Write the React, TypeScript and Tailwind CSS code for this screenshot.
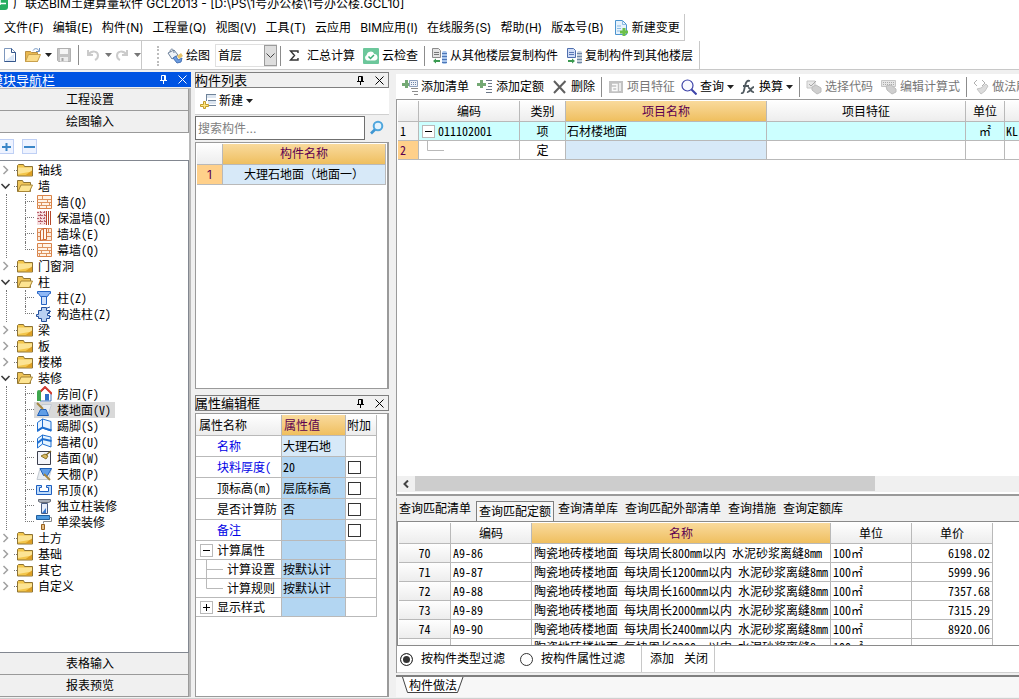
import React, { useState } from "react";

type IconProps = { name: string };

/* 16×16 drawings used by the toolbars and the tree */
const ART: Record<string, React.ReactNode> = {
  page: (
    <>
      <path d="M2.500 1.500h7l4 4v9h-11z" fill="#fff" stroke="#7d97bd" />
      <path d="M9.500 1.500v4h4v9h-11" fill="none" stroke="#35578c" />
      <path d="M4 13l8-6v7H4z" fill="#dbe7f7" />
    </>
  ),
  open: (
    <>
      <path d="M.5 4.500h5l1 1h6v9H.5z" fill="#e9b84f" stroke="#b98f45" />
      <path d="M.5 14.500l3-7h12l-3 7z" fill="#fbdc8a" stroke="#c9a14d" />
      <path d="M8 3.500c2-3 5-2 6 .5M14.500 1v3.500H11" fill="none" stroke="#6f92c0" />
    </>
  ),
  save: (
    <>
      <path d="M1.500 1.500h13v13h-12l-1-1z" fill="#c4c4c4" stroke="#b0b0b0" />
      <path d="M4 2h8v5H4z" fill="#f6f6f6" />
      <path d="M4 10h8v4.500H4z" fill="#ececec" />
      <path d="M5.500 11h2v3h-2z" fill="#a6a6a6" />
    </>
  ),
  undo: (
    <path d="M3 3v5h5M3.500 7.500C7 3 13 4 13 8.500c0 2-1 3.500-3 4.500" fill="none" stroke="#cbcbcb" strokeWidth="2" />
  ),
  redo: (
    <path d="M13 3v5H8M12.500 7.500C9 3 3 4 3 8.500c0 2 1 3.500 3 4.500" fill="none" stroke="#cbcbcb" strokeWidth="2" />
  ),
  paint: (
    <>
      <path d="M1 5l6-3 4 5-6 4z" fill="#eef2f7" stroke="#6b7f99" />
      <path d="M3 4c0-4 4-4 4 1" fill="none" stroke="#6b7f99" />
      <path d="M6 10l4 5 4-1 1-4-4 2-2-4z" fill="#6b9be0" stroke="#4773b5" />
      <path d="M10 8l4-3 2 3-4 3z" fill="#e7c36b" />
    </>
  ),
  cloud: (
    <>
      <rect width="16" height="16" rx="1" fill="#6cc79b" />
      <path d="M4 12.500a3 3 0 01-.3-5.500 4 4 0 017.600-1A3.300 3.300 0 0112 12.500z" fill="#fff" />
      <path d="M5.500 8.500l2 2 3.500-3.500" fill="none" stroke="#3fae78" strokeWidth="1.500" />
    </>
  ),
  copyFrom: (
    <>
      <path d="M1.500 .5h6l2 2v7h-8z" fill="#e4e4e4" stroke="#8b8b8b" />
      <path d="M3 4.500h5M3 6.500h5" stroke="#777" />
      <path d="M11 4.500c0-2 5-2 5 0v10c0 2-5 2-5 0z" fill="#a9c6ec" />
      <path d="M11 5.500h5M11 8.500h5M11 11.500h5M11 14.500h5" stroke="#4c76b8" />
      <path d="M2 13l3-2.500V12h4v2H5v1.500z" fill="#3a9a50" />
    </>
  ),
  copyTo: (
    <>
      <path d="M1.500 .5h6l2 2v7h-8z" fill="#cfdcf7" stroke="#4f6fae" />
      <path d="M3 4.500h5M3 6.500h5" stroke="#5a78b4" />
      <path d="M11 4.500c0-2 5-2 5 0v10c0 2-5 2-5 0z" fill="#c4cfdb" />
      <path d="M11 5.500h5M11 8.500h5M11 11.500h5M11 14.500h5" stroke="#6f86a6" />
      <path d="M9 13l-3-2.500V12H2v2h4v1.500z" fill="#3a9a50" />
    </>
  ),
  change: (
    <>
      <path d="M2.500 .5h7l4 4v10h-11z" fill="#e6f2fc" stroke="#4c94cf" />
      <path d="M9.500 .5v4h4M4 6h4M4 8.500h4M4 11h3" fill="none" stroke="#8bbbe3" />
      <path d="M9.500 8h3v2.500H15v3h-2.500V16h-3v-2.500H7v-3h2.500z" fill="#6cc04a" />
    </>
  ),
  newItem: (
    <>
      <path d="M7 2h9v3H7zM8 8h8v3H8z" fill="#dce5f0" />
      <path d="M6 1.500h10M8 7.500h8M8 12.500h8M6.500 1v7" stroke="#6e8299" fill="none" />
      <path d="M3.500 8.500h2v3h3v2h-3v2h-2v-2h-3v-2h3z" fill="#ffe680" stroke="#c29d2c" />
    </>
  ),
  addList: (
    <>
      <path d="M3 1h3v3h3v3H6v2H3V7H0V4h3z" fill="#74a974" />
      <path d="M7.500 1.500h8v6h-8z" fill="#eef2f8" stroke="#8ea0bd" />
      <path d="M9 3.500h5M9 5.500h5" stroke="#6e84a8" strokeDasharray="1 1" />
      <path d="M9 9.500h7M10 12.500h6M12 15.500h4" stroke="#8c8c8c" />
    </>
  ),
  addQuota: (
    <>
      <path d="M3 1h3v3h3v3H6v2H3V7H0V4h3z" fill="#74a974" />
      <path d="M9 1.500h6M11 4.500h4M11 7.500h4M9 10.500h6M9 13.500h6" stroke="#6b7787" />
    </>
  ),
  del: <path d="M2 2l11 12M13.500 2L2 14" stroke="#5f5f5f" strokeWidth="2" fill="none" />,
  feature: (
    <>
      <rect x="1" y="2" width="14" height="12" fill="#c2c2c2" />
      <path d="M4 5.500h5v6H4.500v-3H9M12 4v8" stroke="#fafafa" strokeWidth="1.500" fill="none" />
    </>
  ),
  query: (
    <>
      <circle cx="6.500" cy="6.500" r="5.500" fill="#f8f9ff" stroke="#3d43a8" strokeWidth="1.200" />
      <path d="M10.500 10.500l5 5" stroke="#3d43a8" strokeWidth="2" />
    </>
  ),
  fx: (
    <path d="M1 14c3 1 3-3 4-7s2-6 5-5M3 7h6M8 9c3-1 2 5 6 4M14 8c-3 0-4 6-7 5" stroke="#505a60" strokeWidth="1.800" fill="none" />
  ),
  pick: (
    <>
      <path d="M1 2h8v7H1z" fill="#e8e8e8" stroke="#c6c6c6" />
      <path d="M3 5l2 2 5-5" stroke="#a8a8a8" fill="none" />
      <path d="M6 8l4-2 5 3v4l-4 2-5-4z" fill="#cfcfcf" stroke="#bcbcbc" />
    </>
  ),
  formula: (
    <>
      <path d="M.500 1.500h14v6H.5z" fill="#e6e6e6" stroke="#c6c6c6" />
      <path d="M2 3.500h11M2 5.500h11" stroke="#a9a9a9" strokeDasharray="1 1" />
      <path d="M5 7l5-1 5 4v3l-4 2-5-4z" fill="#cfcfcf" stroke="#bcbcbc" />
    </>
  ),
  brush: (
    <>
      <path d="M4 1L1 4l3 3M9 1l3 3-3 3" stroke="#b0b0b0" fill="none" />
      <path d="M4 10l4-1 5-4 2 2-3 5-4 3z" fill="#dcdcdc" stroke="#c4c4c4" />
    </>
  ),
  find: (
    <>
      <circle cx="9" cy="6" r="4.300" fill="#e4f3fd" stroke="#4fa6dd" strokeWidth="2" />
      <path d="M6 9.500l-4 4" stroke="#3f97d3" strokeWidth="2.600" />
    </>
  ),
  folder: (
    <>
      <path d="M.5 3.500l1-1h5l1 2h8v9.500H.5z" fill="#f3c64b" stroke="#8d7334" />
      <path d="M1 5.500h14v4L1 12z" fill="#ffeeac" opacity=".75" />
      <path d="M8 13.500l7-5v5z" fill="#dd9f24" />
    </>
  ),
  folderOpen: (
    <>
      <path d="M.5 13.500v-11h5l1 2h7v9z" fill="#f0c558" stroke="#8d7334" />
      <path d="M1 13.500l3-6.500h11.500l-3 6.500z" fill="#fde491" stroke="#a88636" />
    </>
  ),
  brick: (
    <>
      <path d="M1.500 1.500h14v13h-14z" fill="#fff3e6" stroke="#d98248" />
      <path d="M1 5.500h14M1 8.500h14M1 11.500h14M6.500 2v3M11.500 5v3M5.500 8v3M10.500 11v3M13.500 8v3M3.500 11v3" stroke="#dd9460" fill="none" />
    </>
  ),
  warm: (
    <>
      <path d="M1 1h9v14H1z" fill="#f6dcdc" />
      <path d="M1 2.500h8M2 5.500h8M1 8.500h8M2 11.500h8M4.500 1v13M8.500 1v13" stroke="#b8606c" strokeDasharray="2 1" fill="none" />
      <path d="M10.500 1v14M12.500 1v14M14.500 1v14" stroke="#b5482a" />
    </>
  ),
  pier: (
    <>
      <path d="M1.500 2.500h14v12h-14zM1 6.500h14M1 10.500h14M12.500 3v4" fill="#fdebdc" stroke="#d98a58" />
      <path d="M4.500 4.500l3-2v11l-3 1zM7.500 2.500h3v11h-3z" fill="#fff6ee" stroke="#cc6630" />
    </>
  ),
  column: (
    <>
      <path d="M1.500 1.500h13v2h-1l-2 3h-7l-2-3h-1z" fill="#8fb8f6" stroke="#2563c4" />
      <path d="M5.500 6.500h5v8h-5z" fill="#cfe0fb" stroke="#2563c4" />
    </>
  ),
  tieColumn: (
    <>
      <path d="M5.500 1.500h5v3h3v3h-2v2h2v3h-3v3h-5v-3h-3v-2h-2v-2h2v-4h3z" fill="#b9d0f2" stroke="#24509c" />
      <path d="M11 2l3-1M12 13l3-3M12 7l3-2" stroke="#24509c" />
    </>
  ),
  room: (
    <>
      <path d="M4 7l5-5 6 5v8H4z" fill="#fff" stroke="#4b78b8" />
      <path d="M2 8l7-7 7 7" stroke="#d23b2f" strokeWidth="2" fill="none" />
      <path d="M1 6a2 2 0 014 0v9H1z" fill="#3ea64d" />
      <path d="M9 8h4v6.500H9z" fill="#2d6fc7" />
    </>
  ),
  floor: (
    <>
      <path d="M6 2.500h9.500l-3 9H4z" fill="#e6ebf0" stroke="#c3cad2" />
      <path d="M1.500 13.500h11L10 7.500H4.500z" fill="#5f9de6" stroke="#1d5fb8" />
      <path d="M1 1l6 6" stroke="#a58642" strokeWidth="2" />
    </>
  ),
  skirting: (
    <>
      <path d="M1.500 13.500v-9l5-3.500v9zM6.500 1v9l8.500 3V3.500z" fill="#eaf4ff" stroke="#1f6fd0" />
      <path d="M1.500 12.500l5-3 9 3" fill="none" stroke="#1f6fd0" strokeWidth="2" />
    </>
  ),
  dado: (
    <>
      <path d="M1.500 14V4.500l5-3.500v9zM6.500 1l8.500 2v10l-8.500-3z" fill="#e6f4ff" stroke="#1f6fd0" />
      <path d="M1.500 9l5-4 9 2" fill="none" stroke="#1f6fd0" strokeWidth="2" />
    </>
  ),
  wallFace: (
    <>
      <path d="M1.500 1.500h13v13h-13z" fill="#f3f5fb" stroke="#3b3f4d" />
      <path d="M5 6l5 3 2-3-3-2z" fill="#d9b95e" stroke="#8c742c" />
      <path d="M10 5l5-4" stroke="#7d6420" strokeWidth="1.500" />
    </>
  ),
  ceiling: (
    <>
      <path d="M4 2.500h11.500l-3 11H1z" fill="#e9edf1" stroke="#c3cad2" />
      <path d="M4 2.500h11.500l-4 7h-4z" fill="#5f9de6" stroke="#1d5fb8" />
      <path d="M8 8l6 6" stroke="#a58642" strokeWidth="2" />
    </>
  ),
  suspended: (
    <path d="M.5 3.500h5v2h-2v4h9v-4h-2v-2h5v9H.5z" fill="#bfdcfb" stroke="#1d5fc0" />
  ),
  freeColumn: (
    <>
      <path d="M2.500 1.500h12v2l-2 1h-8l-2-1z" fill="#a9aeb8" stroke="#666c78" />
      <path d="M5.500 5.500h6v10h-6z" fill="#e8eefb" stroke="#4a5d83" />
      <path d="M6 15l4-5v5z" fill="#3578d0" />
    </>
  ),
  roller: (
    <>
      <path d="M.5 1.500h13v4H.5z" fill="#4f9be0" stroke="#1f5f9f" />
      <path d="M13.500 3.500h2v4h-8v2" fill="none" stroke="#888" />
      <path d="M5.500 10.500h3v5h-3z" fill="#e6bd83" stroke="#98611f" />
    </>
  ),
};

function Icon({ name }: IconProps) {
  return (
    <svg viewBox="0 0 16 16" className="h-4 w-4 shrink-0" aria-hidden="true">
      {ART[name]}
    </svg>
  );
}

function Caret({ dim }: { dim?: boolean }) {
  return (
    <svg viewBox="0 0 7 4" className="h-1 w-[7px] shrink-0" aria-hidden="true">
      <path d="M0 0h7L3.500 4z" fill={dim ? "#777" : "#222"} />
    </svg>
  );
}

function Divider() {
  return <span className="mx-1.5 h-5 w-px shrink-0 bg-[#8c8c8c]" />;
}

function ToolButton({ icon, label, disabled, caret }: { icon: string; label: string; disabled?: boolean; caret?: boolean }) {
  return (
    <button
      disabled={disabled}
      className="flex h-5 shrink-0 items-center gap-[3px] whitespace-nowrap text-black disabled:text-[#777]"
    >
      <Icon name={icon} />
      {label}
      {caret && <Caret />}
    </button>
  );
}

function PanelHeader({ title, active }: { title: string; active?: boolean }) {
  return (
    <div
      className={
        active
          ? "flex h-[15px] shrink-0 items-center bg-[#0054e3] text-white"
          : "flex h-4 shrink-0 items-center border border-[#7f7f7f] bg-[#f0f0f0] text-black"
      }
    >
      <h2 className={active ? "-ml-2.5 grow whitespace-nowrap text-[13px] leading-[14px]" : "-ml-px grow whitespace-nowrap text-[13px] leading-[14px]"}>{title}</h2>
      <button aria-label="固定" className="mr-2.5 shrink-0">
        <svg viewBox="0 0 9 9" className="h-[9px] w-[9px]">
          <path d="M2.500 5.500v-5h4v5M1 5.500h7M4.500 6v3M5.500 1v4" fill="none" stroke="currentColor" />
        </svg>
      </button>
      <button aria-label="关闭" className="mr-1 shrink-0">
        <svg viewBox="0 0 9 9" className="h-[9px] w-[9px]">
          <path d="M.5 .5l8 8M8.500 .5l-8 8" stroke="currentColor" />
        </svg>
      </button>
    </div>
  );
}

const MENUS = [
  "文件(F)", "编辑(E)", "构件(N)", "工程量(Q)", "视图(V)", "工具(T)",
  "云应用", "BIM应用(I)", "在线服务(S)", "帮助(H)", "版本号(B)",
];

type Node = { label: string; children?: [string, string][] };

const TREE: Node[] = [
  { label: "轴线" },
  { label: "墙", children: [["brick", "墙(Q)"], ["warm", "保温墙(Q)"], ["pier", "墙垛(E)"], ["brick", "幕墙(Q)"]] },
  { label: "门窗洞" },
  { label: "柱", children: [["column", "柱(Z)"], ["tieColumn", "构造柱(Z)"]] },
  { label: "梁" },
  { label: "板" },
  { label: "楼梯" },
  {
    label: "装修",
    children: [
      ["room", "房间(F)"], ["floor", "楼地面(V)"], ["skirting", "踢脚(S)"], ["dado", "墙裙(U)"], ["wallFace", "墙面(W)"],
      ["ceiling", "天棚(P)"], ["suspended", "吊顶(K)"], ["freeColumn", "独立柱装修"], ["roller", "单梁装修"],
    ],
  },
  { label: "土方" },
  { label: "基础" },
  { label: "其它" },
  { label: "自定义" },
];

function Tree() {
  const [selected, setSelected] = useState("楼地面(V)");
  return (
    <ul className="font-['Noto_Sans_Mono_CJK_SC','Noto_Sans_CJK_SC',monospace]">
      {TREE.map((node) => (
        <li key={node.label}>
          <button className="flex h-4 items-center whitespace-nowrap">
            <svg viewBox="0 0 17 16" className="h-4 w-[17px]" aria-hidden="true">
              {node.children ? (
                <path d="M1.500 6l4 4 4-4" fill="none" stroke="#3c3c3c" strokeWidth="1.600" />
              ) : (
                <path d="M3.500 4l4 4-4 4" fill="none" stroke="#a0a0a0" strokeWidth="1.500" />
              )}
              <path d="M14 8.500h3" stroke="#777" strokeDasharray="1 1" />
            </svg>
            <Icon name={node.children ? "folderOpen" : "folder"} />
            <span className="ml-[5px]">{node.label}</span>
          </button>
          {node.children && (
            <ul className="ml-1.5 border-l border-dotted border-[#777] pl-[18px]">
              {node.children.map(([icon, label], i) => (
                <li key={label} className="flex h-4">
                  <span className="flex w-[9px] shrink-0 flex-col">
                    <span className="h-2 border-b border-l border-dotted border-[#777]" />
                    {i < node.children!.length - 1 && <span className="h-2 border-l border-dotted border-[#777]" />}
                  </span>
                  <button
                    onClick={() => setSelected(label)}
                    className={
                      "flex h-4 items-center gap-[5px] whitespace-nowrap pr-1 pl-0.5 " + (label === selected ? "bg-[#d9d9d9]" : "")
                    }
                  >
                    <Icon name={icon} />
                    {label}
                  </button>
                </li>
              ))}
            </ul>
          )}
        </li>
      ))}
    </ul>
  );
}

function NavButton({ children }: { children: string }) {
  return (
    <button className="h-[22px] w-full shrink-0 border-r border-b border-[#9a9a9a] bg-[#f0f0f0] pt-px pr-2 text-center">{children}</button>
  );
}

function Sidebar() {
  return (
    <aside className="flex w-[191px] shrink-0 flex-col pt-0.5">
      <PanelHeader title="模块导航栏" active />
      <div className="mt-px flex min-h-0 grow flex-col border-t border-r-2 border-[#b8b8b8] bg-white">
        <NavButton>工程设置</NavButton>
        <NavButton>绘图输入</NavButton>
        <div className="flex h-[27px] shrink-0 items-center gap-2">
          <button aria-label="全部展开" className="-ml-px grid h-[15px] w-[15px] place-items-center border border-[#bfd0f5] bg-[#eef3ff]">
            <svg viewBox="0 0 11 11" className="h-[11px] w-[11px]"><path d="M5.500 2v8M1 6h9" stroke="#3a86c8" strokeWidth="2" /></svg>
          </button>
          <button aria-label="全部折叠" className="grid h-[15px] w-[15px] place-items-center border border-[#bfd0f5] bg-[#eef3ff]">
            <svg viewBox="0 0 11 11" className="h-[11px] w-[11px]"><path d="M0 6h11" stroke="#3a86c8" strokeWidth="2" /></svg>
          </button>
        </div>
        <nav className="min-h-0 grow overflow-hidden border-y border-r border-[#828790] pt-px">
          <Tree />
        </nav>
        <NavButton>表格输入</NavButton>
        <NavButton>报表预览</NavButton>
      </div>
    </aside>
  );
}

const HEAD = "bg-linear-to-b from-[#fefefe] to-[#ededed] font-normal border-r border-b border-[#b9b9b9]";
const HEAD_ON = "bg-linear-to-b from-[#f9da9c] to-[#efbf5e] font-normal text-[#5c0050] border-r border-b border-[#b9b9b9]";
const CELL = "border-r border-b border-[#b9b9b9]";

function ComponentList() {
  return (
    <section className="flex min-h-0 grow flex-col">
      <PanelHeader title="构件列表" />
      <div className="flex h-[27px] shrink-0 items-center border-b border-[#d0d0d0] bg-white pl-[5px]">
        <ToolButton icon="newItem" label="新建" caret />
      </div>
      <div className="flex h-[26px] shrink-0 items-center bg-[#f0f0f0]">
        <input
          aria-label="搜索构件"
          placeholder="搜索构件..."
          className="h-6 w-0 grow border border-[#6f6f6f] bg-white px-0.5 outline-none placeholder:text-[#808080]"
        />
        <button aria-label="搜索" className="mx-1 grid h-5 w-4 place-items-center"><Icon name="find" /></button>
      </div>
      <div className="mt-px min-h-0 grow overflow-hidden border border-r-2 border-[#9a9a9a] bg-white p-px">
        <table className="w-full table-fixed border-separate border-spacing-0">
          <thead>
            <tr className="h-[21px]">
              <th className={HEAD + " w-[26px]"} aria-label="序号" />
              <th className={HEAD_ON}>构件名称</th>
            </tr>
          </thead>
          <tbody>
            <tr className="h-5 text-center">
              <td className={CELL + " bg-[#ffd08a] text-[#5c0050]"}>1</td>
              <td className={CELL + " bg-[#d7e9f8]"}>大理石地面（地面一）</td>
            </tr>
          </tbody>
        </table>
      </div>
    </section>
  );
}

type Prop = { name: string; value?: string; blue?: boolean; check?: boolean; kind?: "open" | "closed" | "mid" | "end"; light?: boolean };

const PROPS: Prop[] = [
  { name: "名称", value: "大理石地", blue: true, light: true },
  { name: "块料厚度(", value: "20", blue: true, check: true },
  { name: "顶标高(m)", value: "层底标高", check: true },
  { name: "是否计算防", value: "否", check: true },
  { name: "备注", blue: true, check: true },
  { name: "计算属性", kind: "open" },
  { name: "计算设置", value: "按默认计", kind: "mid" },
  { name: "计算规则", value: "按默认计", kind: "end" },
  { name: "显示样式", kind: "closed" },
];

function Expander({ open }: { open: boolean }) {
  return (
    <button aria-label={open ? "折叠" : "展开"} className="ml-1 grid h-[13px] w-[13px] shrink-0 place-items-center border border-[#b9b9b9] bg-white">
      <svg viewBox="0 0 7 7" className="h-[7px] w-[7px]">
        <path d={open ? "M0 3.500h7" : "M0 3.500h7M3.500 0v7"} stroke="#000" />
      </svg>
    </button>
  );
}

function PropertyEditor() {
  return (
    <section className="mt-1.5 flex shrink-0 flex-col">
      <PanelHeader title="属性编辑框" />
      <div className="mt-0.5 h-[284px] overflow-hidden border border-r-2 border-[#9a9a9a] bg-white pt-px">
        <table className="w-[181px] table-fixed border-separate border-spacing-0 whitespace-nowrap text-left font-['Noto_Sans_Mono_CJK_SC','Noto_Sans_CJK_SC',monospace]">
          <thead>
            <tr className="h-[21px]">
              <th className={HEAD + " w-[86px] pl-[3px]"}>属性名称</th>
              <th className={HEAD_ON + " w-16 pl-0.5"}>属性值</th>
              <th className={HEAD + " pl-px"}>附加</th>
            </tr>
          </thead>
          <tbody>
            {PROPS.map((p) => (
              <tr key={p.name} className={p.kind ? "h-[19px]" : "h-[21px]"}>
                <td className={CELL + " overflow-hidden " + (p.blue ? "text-[#0000e6]" : "text-black")}>
                  <div className="flex items-center">
                    {p.kind === "open" || p.kind === "closed" ? (
                      <><Expander open={p.kind === "open"} /><span className="ml-1">{p.name}</span></>
                    ) : p.kind ? (
                      <>
                        <svg viewBox="0 0 31 18" className="h-[18px] w-[31px] shrink-0" aria-hidden="true">
                          <path d={p.kind === "mid" ? "M10.500 0v18M10.500 9.500H27" : "M10.500 0v9.500H27"} fill="none" stroke="#b9b9b9" />
                        </svg>
                        {p.name}
                      </>
                    ) : (
                      <span className="ml-[21px]">{p.name}</span>
                    )}
                  </div>
                </td>
                <td className={CELL + " pl-px " + (p.light ? "bg-[#d7e9f8]" : "bg-[#b3d6f2]")}>{p.value}</td>
                <td className={CELL}>
                  {p.check && (
                    <input type="checkbox" aria-label={p.name + "附加"} className="ml-0.5 block h-[13px] w-[13px] appearance-none border border-[#333] bg-white checked:bg-[#333]" />
                  )}
                </td>
              </tr>
            ))}
          </tbody>
        </table>
      </div>
    </section>
  );
}

function BillTable() {
  return (
    <div className="flex min-h-0 grow flex-col border-t border-b-2 border-l border-[#9a9a9a] bg-white">
      <div className="min-h-0 grow overflow-hidden pt-px pl-px">
        <table className="w-full table-fixed border-separate border-spacing-0 whitespace-nowrap font-['Noto_Sans_Mono_CJK_SC','Noto_Sans_CJK_SC',monospace]">
          <thead>
            <tr className="h-[21px]">
              <th className={HEAD + " w-[21px]"} aria-label="序号" />
              <th className={HEAD + " w-[101px]"}>编码</th>
              <th className={HEAD + " w-[46px]"}>类别</th>
              <th className={HEAD_ON + " w-[201px]"}>项目名称</th>
              <th className={HEAD + " w-[199px]"}>项目特征</th>
              <th className={HEAD + " w-[39px]"}>单位</th>
              <th className="border-b border-[#b9b9b9] bg-linear-to-b from-[#fefefe] to-[#ededed]" aria-label="工程量表达式" />
            </tr>
          </thead>
          <tbody>
            <tr className="h-[19px] bg-[#ccffff]">
              <td className={CELL + " bg-[#f4f4f4] pl-0.5"}>1</td>
              <td className={CELL}>
                <div className="-ml-px flex items-center gap-[3px]"><Expander open />011102001</div>
              </td>
              <td className={CELL + " text-center"}>项</td>
              <td className={CELL + " pl-px"}>石材楼地面</td>
              <td className={CELL} />
              <td className={CELL + " text-center"}>㎡</td>
              <td className="overflow-hidden border-b border-[#b9b9b9] pl-px">KL</td>
            </tr>
            <tr className="h-[19px]">
              <td className={CELL + " bg-[#ffd08a] pl-0.5 text-[#5c0050]"}>2</td>
              <td className={CELL}>
                <svg viewBox="0 0 30 18" className="block h-[18px] w-[30px]" aria-hidden="true">
                  <path d="M8.500 0v9.500H25" fill="none" stroke="#b9b9b9" />
                </svg>
              </td>
              <td className={CELL + " text-center"}>定</td>
              <td className={CELL + " bg-[#d7e9f8]"} />
              <td className={CELL} />
              <td className={CELL} />
              <td className="border-b border-[#b9b9b9]" />
            </tr>
          </tbody>
        </table>
      </div>
      <div className="mb-0.5 flex h-4 shrink-0 bg-[#f0f0f0]">
        <button aria-label="向左滚动" className="grid w-[18px] place-items-center">
          <svg viewBox="0 0 8 8" className="h-2 w-2"><path d="M6 .5L2.500 4 6 7.500" fill="none" stroke="#444" strokeWidth="2" /></svg>
        </button>
        <span className="h-[15px] w-[74%] bg-[#cdcdcd]" />
      </div>
    </div>
  );
}

const TABS = ["查询匹配清单", "查询匹配定额", "查询清单库", "查询匹配外部清单", "查询措施", "查询定额库"];

const QUOTAS: [number, string, string, string][] = [
  [70, "A9-86", "陶瓷地砖楼地面 每块周长800mm以内 水泥砂浆离缝8mm", "6198.02"],
  [71, "A9-87", "陶瓷地砖楼地面 每块周长1200mm以内 水泥砂浆离缝8mm", "5999.96"],
  [72, "A9-88", "陶瓷地砖楼地面 每块周长1600mm以内 水泥砂浆离缝8mm", "7357.68"],
  [73, "A9-89", "陶瓷地砖楼地面 每块周长2000mm以内 水泥砂浆离缝8mm", "7315.29"],
  [74, "A9-90", "陶瓷地砖楼地面 每块周长2400mm以内 水泥砂浆离缝8mm", "8920.06"],
];

function QueryPanel() {
  const [tab, setTab] = useState("查询匹配定额");
  return (
    <section className="mt-0.5 flex shrink-0 flex-col border-l border-[#9a9a9a]">
      <div role="tablist" className="flex h-[23px] items-start bg-[#f0f0f0]">
        {TABS.map((t) => (
          <button
            key={t}
            role="tab"
            aria-selected={t === tab}
            onClick={() => setTab(t)}
            className={
              "shrink-0 whitespace-nowrap " +
              (t === tab ? "mt-[3px] mr-0.5 h-5 border border-b-0 border-[#7f7f7f] bg-[#f7f7f7] px-0.5" : "h-[22px] px-0.5 mr-[3px]")
            }
          >
            {t}
          </button>
        ))}
      </div>
      <div className="h-[125px] overflow-hidden border-y border-l border-[#8a8a8a] bg-white p-px">
        <table className="w-[594px] table-fixed border-separate border-spacing-0 whitespace-nowrap font-['Noto_Sans_Mono_CJK_SC','Noto_Sans_CJK_SC',monospace]">
          <thead>
            <tr className="h-[21px]">
              <th className={HEAD + " w-[52px]"} aria-label="序号" />
              <th className={HEAD + " w-[81px]"}>编码</th>
              <th className={HEAD_ON + " w-[299px]"}>名称</th>
              <th className={HEAD + " w-[81px]"}>单位</th>
              <th className={HEAD}>单价</th>
            </tr>
          </thead>
          <tbody>
            {QUOTAS.map(([no, code, name, price]) => (
              <tr key={no} className="h-[19px]">
                <td className={HEAD + " text-center"}>{no}</td>
                <td className={CELL + " pl-0.5"}>{code}</td>
                <td className={CELL + " overflow-hidden pl-0.5"}>{name}</td>
                <td className={CELL + " pl-0.5"}>100㎡</td>
                <td className={CELL + " pr-0.5 text-right"}>{price}</td>
              </tr>
            ))}
            <tr className="h-[19px] align-top">
              <td className={HEAD} />
              <td className={CELL} />
              <td className={CELL + " overflow-hidden pl-0.5"}>陶瓷地砖楼地面 每块周长3200mm以内 水泥砂浆离缝8mm</td>
              <td className={CELL + " pl-0.5"}>100㎡</td>
              <td className={CELL} />
            </tr>
          </tbody>
        </table>
      </div>
      <div className="flex h-[27px] items-center border-b border-[#d0d0d0] bg-white">
        <Radio label="按构件类型过滤" checked />
        <Radio label="按构件属性过滤" />
        <div className="ml-1 flex h-full items-center gap-2.5 border-x border-[#c8c8c8] pr-1.5 pl-2">
          <button>添加</button>
          <button>关闭</button>
        </div>
      </div>
    </section>
  );
}

function Radio({ label, checked }: { label: string; checked?: boolean }) {
  return (
    <label className="mr-3 ml-[3px] flex items-center gap-2 whitespace-nowrap">
      <input
        type="radio"
        name="filter"
        defaultChecked={checked}
        className="h-[13px] w-[13px] appearance-none rounded-full border border-[#333] bg-white checked:bg-[#333] checked:shadow-[inset_0_0_0_2px_#fff]"
      />
      {label}
    </label>
  );
}

export default function App() {
  return (
    <div className="flex h-screen flex-col overflow-hidden bg-[#f0f0f0] font-['Inter','Noto_Sans_CJK_SC',sans-serif] text-[12px] leading-4 text-black">
      <header className="flex h-3.5 shrink-0 items-end overflow-hidden bg-white">
        <svg viewBox="0 0 9 14" className="h-3.5 w-[9px]" aria-hidden="true">
          <path d="M0 0h8v7a3 3 0 01-3 3H0z" fill="#27ae60" />
          <path d="M0 3.500h6M0 0v5" stroke="#fff" strokeWidth="1.500" />
        </svg>
        <h1 className="ml-1 whitespace-nowrap pb-0.5">广联达BIM土建算量软件 GCL2013 - [D:\PS\1号办公楼\1号办公楼.GCL10]</h1>
      </header>

      <div className="flex h-[27px] shrink-0 bg-white">
        <nav className="flex items-center gap-[9px] border-r border-b border-[#c8c8c8] pt-px pr-1 pl-1">
          {MENUS.map((m) => (
            <button key={m} className="whitespace-nowrap">{m}</button>
          ))}
          <ToolButton icon="change" label="新建变更" />
        </nav>
      </div>

      <div className="flex h-[29px] shrink-0 border-b border-[#c8c8c8] bg-white">
        <div className="flex items-center border-r border-[#c8c8c8] pl-0.5">
          <button aria-label="新建"><Icon name="page" /></button>
          <button aria-label="打开" className="ml-[7px] flex items-center gap-1"><Icon name="open" /><Caret /></button>
          <button aria-label="保存" className="ml-1"><Icon name="save" /></button>
          <Divider />
          <button aria-label="撤销" className="flex items-center gap-1"><Icon name="undo" /><Caret dim /></button>
          <button aria-label="恢复" className="ml-0.5 flex items-center gap-1"><Icon name="redo" /><Caret dim /></button>
        </div>
        <div className="flex items-center border-r border-[#c8c8c8] pt-px pr-1.5 pl-[15px]">
          <span className="mr-2 h-5 border-l-2 border-dotted border-[#bdbdbd]" />
          <ToolButton icon="paint" label="绘图" />
          <div className="relative ml-[5px] h-[23px] w-[62px] shrink-0">
            <select aria-label="楼层" className="h-full w-full appearance-none border border-[#e0e0e0] bg-white pl-0.5 outline-none">
              <option>首层</option>
            </select>
            <span className="pointer-events-none absolute inset-y-px right-0 grid w-[13px] place-items-center border border-[#9c9c9c] bg-[#dedede]">
              <svg viewBox="0 0 9 5" className="h-[5px] w-[9px]"><path d="M.5 .5l4 4 4-4" fill="none" stroke="#444" /></svg>
            </span>
          </div>
          <span className="mr-2 ml-[3px] h-5 w-px bg-[#8c8c8c]" />
          <button className="flex items-center gap-2 whitespace-nowrap">
            <svg viewBox="0 0 10 11" className="h-[11px] w-2.5" aria-hidden="true">
              <path d="M9 3V1H1.500l4 4.500-4 4.500H9V8" fill="none" stroke="#333" strokeWidth="1.400" />
            </svg>
            汇总计算
          </button>
          <span className="w-2" />
          <ToolButton icon="cloud" label="云检查" />
          <Divider />
          <div className="flex gap-2">
            <ToolButton icon="copyFrom" label="从其他楼层复制构件" />
            <ToolButton icon="copyTo" label="复制构件到其他楼层" />
          </div>
        </div>
      </div>

      <div className="flex min-h-0 grow border-b border-[#d0d0d0] pb-px">
        <Sidebar />
        <div className="ml-1 flex w-[194px] shrink-0 flex-col pt-0.5">
          <ComponentList />
          <PropertyEditor />
        </div>
        <main className="ml-[7px] flex min-w-0 grow flex-col pt-1">
          <div className="flex h-[25px] shrink-0 items-center overflow-hidden bg-white pl-1.5">
            <div className="flex shrink-0 gap-2">
              <ToolButton icon="addList" label="添加清单" />
              <ToolButton icon="addQuota" label="添加定额" />
              <ToolButton icon="del" label="删除" />
            </div>
            <Divider />
            <div className="flex shrink-0 gap-1.5">
              <ToolButton icon="feature" label="项目特征" disabled />
              <ToolButton icon="query" label="查询" caret />
              <ToolButton icon="fx" label="换算" caret />
            </div>
            <Divider />
            <div className="flex shrink-0 gap-2">
              <ToolButton icon="pick" label="选择代码" disabled />
              <ToolButton icon="formula" label="编辑计算式" disabled />
            </div>
            <Divider />
            <ToolButton icon="brush" label="做法刷" disabled />
          </div>
          <BillTable />
          <QueryPanel />
          <div className="mt-0.5 h-[22px] shrink-0 border-t-2 border-[#7f7f7f] bg-[#f7f7f7] pl-1.5">
            <button className="relative block h-[17px] w-[62px] text-center">
              <svg viewBox="0 0 62 17" className="absolute inset-0 h-full w-full" aria-hidden="true">
                <path d="M.5 0l5 15.500h50L61 0" fill="#fff" stroke="#444" />
              </svg>
              <span className="relative">构件做法</span>
            </button>
          </div>
        </main>
      </div>
    </div>
  );
}
